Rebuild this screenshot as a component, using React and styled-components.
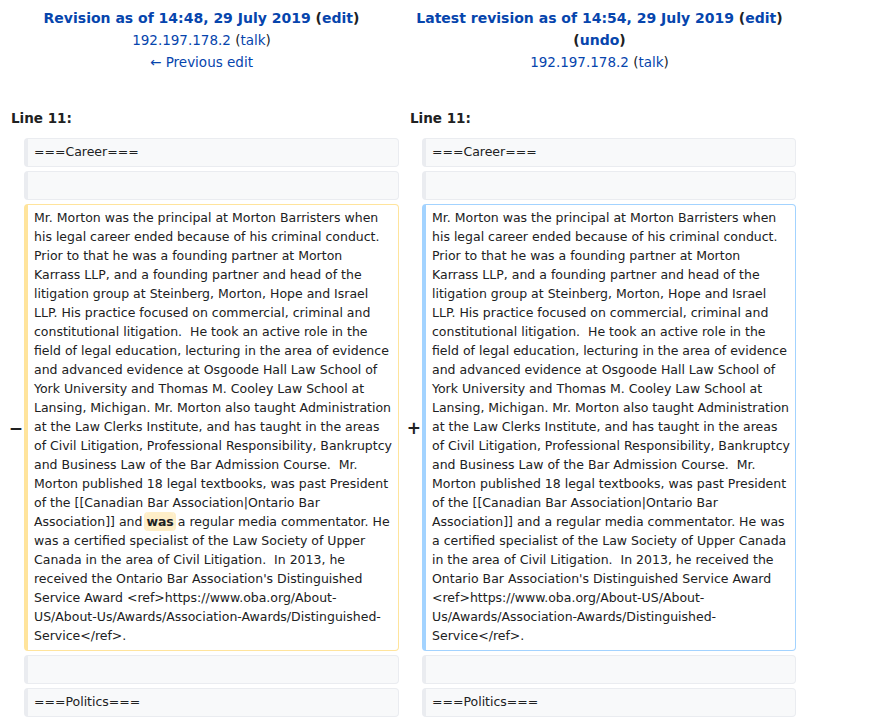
import styled, { createGlobalStyle } from 'styled-components';

const GlobalStyle = createGlobalStyle`
  body {
    margin: 0;
    background: #fff;
    color: #202122;
    font-family: "DejaVu Sans", sans-serif;
  }
`;

const DiffTable = styled.div`
  width: 800px;
  box-sizing: border-box;
  padding: 4px;
  display: grid;
  grid-template-columns: 16px 375px 15px 374px;
  column-gap: 4px;
  row-gap: 4px;
`;

const TitleCell = styled.div`
  grid-column: span 2;
  text-align: center;
  font-size: 13.5px;
  line-height: 22px;
  padding-top: 3px;
`;

const TitleLine = styled.div`
  font-weight: ${({ $bold }) => ($bold ? 'bold' : 'normal')};
  font-size: ${({ $bold }) => ($bold ? '14px' : '13.5px')};
`;

const Link = styled.a`
  color: #0645ad;
  text-decoration: none;
`;

const LineNo = styled.div`
  grid-column: span 2;
  font-size: 13.5px;
  font-weight: bold;
  line-height: 20px;
  padding: 31px 7px 6px;
`;

const Marker = styled.div`
  display: flex;
  align-items: center;
  justify-content: flex-end;
  font-size: 17px;
  font-weight: bold;
  margin-right: -3px;
`;

const borderColors = {
  context: '#eaecf0',
  deleted: '#ffe49c',
  added: '#a3d3ff',
};

// content box kept at 358px in both columns so the wraps land where they do on the wiki
const Line = styled.div`
  box-sizing: border-box;
  min-height: 29px;
  padding: 3px ${({ $right }) => ($right ? '5px' : '6px')} 5px 6px;
  border: 1px solid ${({ $kind }) => borderColors[$kind]};
  border-left-width: 4px;
  border-radius: 4px;
  background: ${({ $kind }) => ($kind === 'context' ? '#f8f9fa' : '#fff')};
  font-size: 12.5px;
  line-height: 19px;
  white-space: pre-wrap;
  overflow-wrap: break-word;
`;

const Change = styled.span`
  font-weight: bold;
  background: #feeec8;
  border-radius: 4px;
  padding: 2px 0;
  box-shadow: -2px 0 0 #feeec8, 2px 0 0 #feeec8;
`;

const oldText = {
  before:
    "Mr. Morton was the principal at Morton Barristers when his legal career ended because of his criminal conduct. Prior to that he was a founding partner at Morton Karrass LLP, and a founding partner and head of the litigation group at Steinberg, Morton, Hope and Israel LLP. His practice focused on commercial, criminal and constitutional litigation.  He took an active role in the field of legal education, lecturing in the area of evidence and advanced evidence at Osgoode Hall Law School of York University and Thomas M. Cooley Law School at Lansing, Michigan. Mr. Morton also taught Administration at the Law Clerks Institute, and has taught in the areas of Civil Litigation, Professional Responsibility, Bankruptcy and Business Law of the Bar Admission Course.  Mr. Morton published 18 legal textbooks, was past President of the [[Canadian Bar Association|Ontario Bar Association]] and ",
  after:
    " a regular media commentator. He was a certified specialist of the Law Society of Upper Canada in the area of Civil Litigation.  In 2013, he received the Ontario Bar Association's Distinguished Service Award <ref>https://www.oba.org/About-US/About-Us/Awards/Association-Awards/Distinguished-Service</ref>.",
};

const newText =
  "Mr. Morton was the principal at Morton Barristers when his legal career ended because of his criminal conduct. Prior to that he was a founding partner at Morton Karrass LLP, and a founding partner and head of the litigation group at Steinberg, Morton, Hope and Israel LLP. His practice focused on commercial, criminal and constitutional litigation.  He took an active role in the field of legal education, lecturing in the area of evidence and advanced evidence at Osgoode Hall Law School of York University and Thomas M. Cooley Law School at Lansing, Michigan. Mr. Morton also taught Administration at the Law Clerks Institute, and has taught in the areas of Civil Litigation, Professional Responsibility, Bankruptcy and Business Law of the Bar Admission Course.  Mr. Morton published 18 legal textbooks, was past President of the [[Canadian Bar Association|Ontario Bar Association]] and a regular media commentator. He was a certified specialist of the Law Society of Upper Canada in the area of Civil Litigation.  In 2013, he received the Ontario Bar Association's Distinguished Service Award <ref>https://www.oba.org/About-US/About-Us/Awards/Association-Awards/Distinguished-Service</ref>.";

function ContextRow({ text }) {
  return (
    <>
      <Marker />
      <Line $kind="context">{text}</Line>
      <Marker />
      <Line $kind="context" $right>{text}</Line>
    </>
  );
}

function App() {
  return (
    <>
      <GlobalStyle />
      <DiffTable>
        <TitleCell>
          <TitleLine $bold>
            <Link href="#">Revision as of 14:48, 29 July 2019</Link> (<Link href="#">edit</Link>)
          </TitleLine>
          <TitleLine>
            <Link href="#">192.197.178.2</Link> (<Link href="#">talk</Link>)
          </TitleLine>
          <TitleLine>
            <Link href="#">← Previous edit</Link>
          </TitleLine>
        </TitleCell>
        <TitleCell>
          <TitleLine $bold>
            <Link href="#">Latest revision as of 14:54, 29 July 2019</Link> (<Link href="#">edit</Link>) (<Link href="#">undo</Link>)
          </TitleLine>
          <TitleLine>
            <Link href="#">192.197.178.2</Link> (<Link href="#">talk</Link>)
          </TitleLine>
        </TitleCell>

        <LineNo>Line 11:</LineNo>
        <LineNo>Line 11:</LineNo>

        <ContextRow text="===Career===" />
        <ContextRow text="" />

        <Marker>−</Marker>
        <Line $kind="deleted">
          {oldText.before}
          <Change>was</Change>
          {oldText.after}
        </Line>
        <Marker>+</Marker>
        <Line $kind="added" $right>{newText}</Line>

        <ContextRow text="" />
        <ContextRow text="===Politics===" />
      </DiffTable>
    </>
  );
}

export default App;
